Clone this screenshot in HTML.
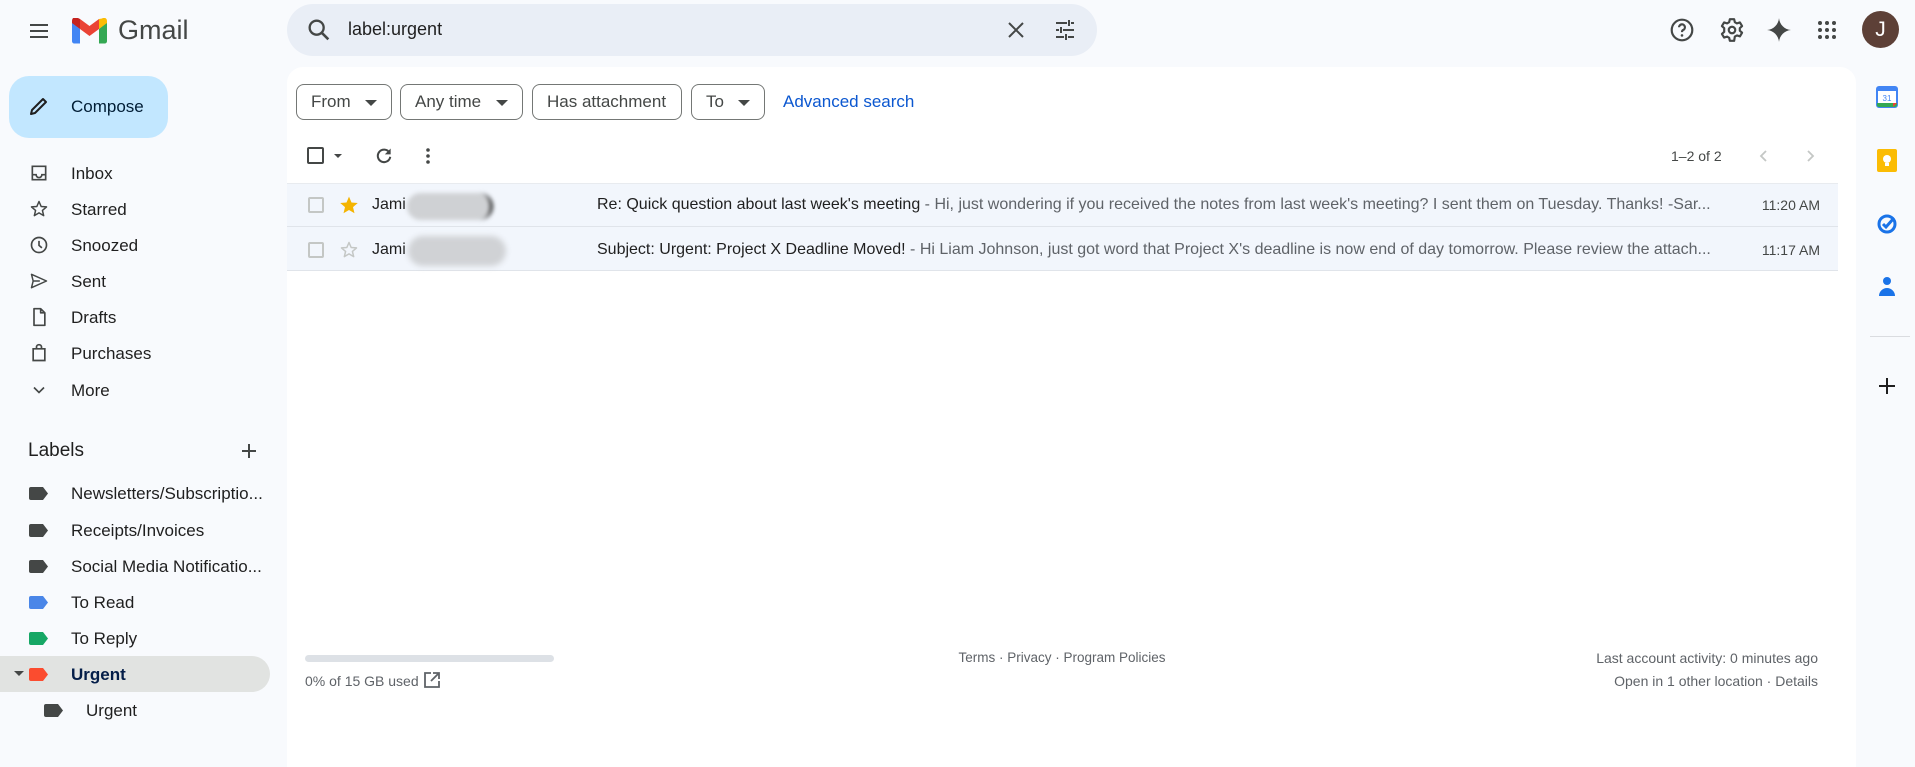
<!DOCTYPE html>
<html><head><meta charset="utf-8"><style>
*{margin:0;padding:0;box-sizing:border-box}
body{width:1915px;height:751px;overflow:hidden;background:#f8fafd;font-family:"Liberation Sans",Arial,sans-serif;color:#1f1f1f;position:relative}
.a{position:absolute}
.nav{position:absolute;left:71px;font-size:17px;color:#1f1f1f;line-height:20px}
.ic{position:absolute;left:29px;width:20px;height:20px}
.chip{position:absolute;top:84px;height:36px;border:1px solid #747775;border-radius:8px;font-size:17px;line-height:34px;padding-left:14px;color:#444746;background:#fff}
.chip .tri{position:absolute;right:14px;top:15px;width:0;height:0;border-left:6px solid transparent;border-right:6px solid transparent;border-top:6px solid #444746}
.lab{position:absolute;left:29px;width:19px;height:13px}
.row{position:absolute;left:287px;width:1551px;height:44px;background:#f2f6fc;border-bottom:1px solid #e0e4ea;font-size:16px;line-height:44px}
.g{color:#5f6368}
.foot{font-size:14px;color:#5f6368;position:absolute;white-space:nowrap}
</style></head><body>
<svg class="a" style="left:27px;top:19px" width="24" height="24" viewBox="0 0 24 24"><path d="M3 6h18M3 12h18M3 18h18" stroke="#444746" stroke-width="2"/></svg>
<svg class="a" style="left:72px;top:18px" width="35" height="26" viewBox="0 0 35 26"><path d="M0 4v19c0 1.5 1 2.5 2.5 2.5H8V11z" fill="#4285f4"/><path d="M27 25.5h5.5c1.5 0 2.5-1 2.5-2.5V4L27 11z" fill="#34a853"/><path d="M27 1v10l8-6V3c0-3-3-4-5-2.5z" fill="#fbbc04"/><path d="M8 11V1l9.5 7L27 1v10l-9.5 7z" fill="#ea4335"/><path d="M0 3v2l8 6V1L5 -.5C3-1.5 0-.5 0 3z" fill="#c5221f"/></svg>
<div class="a" style="left:118px;top:15px;font-size:27px;color:#444746">Gmail</div>
<div class="a" style="left:287px;top:4px;width:810px;height:52px;border-radius:26px;background:#e9eef6"></div>
<svg class="a" style="left:305px;top:16px" width="28" height="28" viewBox="0 0 24 24"><circle cx="10" cy="10" r="6" fill="none" stroke="#444746" stroke-width="2"/><path d="M14.5 14.5L20 20" stroke="#444746" stroke-width="2.2"/></svg>
<div class="a" style="left:348px;top:19px;font-size:18px;color:#1f1f1f">label:urgent</div>
<svg class="a" style="left:1004px;top:18px" width="24" height="24" viewBox="0 0 24 24"><path d="M5 5l14 14M19 5L5 19" stroke="#444746" stroke-width="2"/></svg>
<svg class="a" style="left:1053px;top:18px" width="24" height="24" viewBox="0 0 24 24"><path d="M3 5h11M18 5h3M3 12h3M10 12h11M3 19h8M15 19h6M16 2v6M8 9v6M13 16v6" stroke="#444746" stroke-width="2"/></svg>
<svg class="a" style="left:1669px;top:17px" width="26" height="26" viewBox="0 0 24 24"><circle cx="12" cy="12" r="9.5" fill="none" stroke="#444746" stroke-width="2"/><path d="M9.3 9.5a2.7 2.7 0 1 1 3.7 2.5c-.8.4-1 1-1 2" fill="none" stroke="#444746" stroke-width="2"/><circle cx="12" cy="17" r="1.2" fill="#444746"/></svg>
<svg class="a" style="left:1719px;top:17px" width="26" height="26" viewBox="0 0 24 24"><path d="M10 2h4l.6 2.8 2 1.1 2.7-.9 2 3.4-2.1 1.9v2.3l2.1 1.9-2 3.4-2.7-.9-2 1.1L14 22h-4l-.6-2.8-2-1.1-2.7.9-2-3.4 2.1-1.900V10.3L2.7 8.4l2-3.4 2.7.9 2-1.1z" fill="none" stroke="#444746" stroke-width="2" stroke-linejoin="round"/><circle cx="12" cy="12" r="3" fill="none" stroke="#444746" stroke-width="2"/></svg>
<svg class="a" style="left:1766px;top:17px" width="26" height="26" viewBox="0 0 24 24"><path d="M12 1C12.6 7 17 11.4 23 12 17 12.6 12.6 17 12 23 11.4 17 7 12.6 1 12 7 11.4 11.4 7 12 1z" fill="#444746"/></svg>
<svg class="a" style="left:1815px;top:18px" width="24" height="24" viewBox="0 0 24 24" fill="#444746"><circle cx="5" cy="5" r="2"/><circle cx="12" cy="5" r="2"/><circle cx="19" cy="5" r="2"/><circle cx="5" cy="12" r="2"/><circle cx="12" cy="12" r="2"/><circle cx="19" cy="12" r="2"/><circle cx="5" cy="19" r="2"/><circle cx="12" cy="19" r="2"/><circle cx="19" cy="19" r="2"/></svg>
<div class="a" style="left:1862px;top:11px;width:37px;height:37px;border-radius:50%;background:#5d4037;color:#fff;font-size:21px;text-align:center;line-height:37px">J</div>
<div class="a" style="left:9px;top:76px;width:159px;height:62px;border-radius:20px;background:#c2e7ff"></div>
<svg class="a" style="left:27px;top:94px" width="24" height="24" viewBox="0 0 24 24"><path d="M4 20l1-4L16 5l3 3L8 19z" fill="none" stroke="#1f1f1f" stroke-width="2" stroke-linejoin="round"/></svg>
<div class="a" style="left:71px;top:97px;font-size:17px;color:#001d35">Compose</div>
<svg class="ic" style="top:163px" viewBox="0 0 24 24"><path d="M4 4h16v16H4zM4 14h4.5a3.5 3.5 0 0 0 7 0H20" fill="none" stroke="#444746" stroke-width="2"/></svg><div class="nav" style="top:164px">Inbox</div>
<svg class="ic" style="top:199px" viewBox="0 0 24 24"><path d="M12 3l2.6 6 6.4.5-4.9 4.2 1.5 6.3L12 16.6 6.4 20l1.5-6.3L3 9.5 9.4 9z" fill="none" stroke="#444746" stroke-width="1.8" stroke-linejoin="round"/></svg><div class="nav" style="top:200px">Starred</div>
<svg class="ic" style="top:235px" viewBox="0 0 24 24"><circle cx="12" cy="12" r="9" fill="none" stroke="#444746" stroke-width="2"/><path d="M12 7v5.5l3.5 3" fill="none" stroke="#444746" stroke-width="2"/></svg><div class="nav" style="top:236px">Snoozed</div>
<svg class="ic" style="top:271px" viewBox="0 0 24 24"><path d="M3 4l18 8-18 8 2-8zM5 12h8" fill="none" stroke="#444746" stroke-width="1.8" stroke-linejoin="round"/></svg><div class="nav" style="top:272px">Sent</div>
<svg class="ic" style="top:307px" viewBox="0 0 24 24"><path d="M6 2h8l5 5v15H6zM14 2v5h5" fill="none" stroke="#444746" stroke-width="2" stroke-linejoin="round"/></svg><div class="nav" style="top:308px">Drafts</div>
<svg class="ic" style="top:343px" viewBox="0 0 24 24"><path d="M5 7h14v14H5zM9 7V5a3 3 0 0 1 6 0v2" fill="none" stroke="#444746" stroke-width="2"/></svg><div class="nav" style="top:344px">Purchases</div>
<svg class="ic" style="top:380px" viewBox="0 0 24 24"><path d="M6 9l6 6 6-6" fill="none" stroke="#444746" stroke-width="2"/></svg><div class="nav" style="top:381px">More</div>
<div class="a" style="left:28px;top:440px;font-size:19px;color:#1f1f1f">Labels</div>
<svg class="a" style="left:240px;top:442px" width="18" height="18" viewBox="0 0 18 18"><path d="M9 2v14M2 9h14" stroke="#444746" stroke-width="2"/></svg>
<svg class="lab" style="top:487px" viewBox="0 0 19 13"><path d="M2 0h12l5 6.5L14 13H2a2 2 0 0 1-2-2V2a2 2 0 0 1 2-2z" fill="#444746"/></svg><div class="nav" style="top:484px">Newsletters/Subscriptio...</div>
<svg class="lab" style="top:524px" viewBox="0 0 19 13"><path d="M2 0h12l5 6.5L14 13H2a2 2 0 0 1-2-2V2a2 2 0 0 1 2-2z" fill="#444746"/></svg><div class="nav" style="top:521px">Receipts/Invoices</div>
<svg class="lab" style="top:560px" viewBox="0 0 19 13"><path d="M2 0h12l5 6.5L14 13H2a2 2 0 0 1-2-2V2a2 2 0 0 1 2-2z" fill="#444746"/></svg><div class="nav" style="top:557px">Social Media Notificatio...</div>
<svg class="lab" style="top:596px" viewBox="0 0 19 13"><path d="M2 0h12l5 6.5L14 13H2a2 2 0 0 1-2-2V2a2 2 0 0 1 2-2z" fill="#4a86e8"/></svg><div class="nav" style="top:593px">To Read</div>
<svg class="lab" style="top:632px" viewBox="0 0 19 13"><path d="M2 0h12l5 6.5L14 13H2a2 2 0 0 1-2-2V2a2 2 0 0 1 2-2z" fill="#16a765"/></svg><div class="nav" style="top:629px">To Reply</div>
<div class="a" style="left:0;top:656px;width:270px;height:36px;border-radius:0 18px 18px 0;background:#e1e3e1"></div>
<div class="a" style="left:14px;top:671px;border-left:5px solid transparent;border-right:5px solid transparent;border-top:5px solid #444746"></div>
<svg class="lab" style="top:668px" viewBox="0 0 19 13"><path d="M2 0h12l5 6.5L14 13H2a2 2 0 0 1-2-2V2a2 2 0 0 1 2-2z" fill="#fb4c2f"/></svg><div class="nav" style="top:665px;font-weight:bold;color:#041e49">Urgent</div>
<svg class="lab" style="top:704px;left:44px" viewBox="0 0 19 13"><path d="M2 0h12l5 6.5L14 13H2a2 2 0 0 1-2-2V2a2 2 0 0 1 2-2z" fill="#444746"/></svg><div class="nav" style="top:701px;left:86px">Urgent</div>
<div class="a" style="left:287px;top:67px;width:1569px;height:700px;background:#fff;border-radius:16px 16px 0 0"></div>
<div class="chip" style="left:296px;width:96px">From<span class="tri"></span></div>
<div class="chip" style="left:400px;width:123px">Any time<span class="tri"></span></div>
<div class="chip" style="left:532px;width:150px">Has attachment</div>
<div class="chip" style="left:691px;width:74px">To<span class="tri"></span></div>
<div class="a" style="left:783px;top:92px;font-size:17px;color:#0b57d0">Advanced search</div>
<div class="a" style="left:307px;top:147px;width:17px;height:17px;border:2px solid #444746;border-radius:2px"></div>
<div class="a" style="left:334px;top:154px;border-left:4px solid transparent;border-right:4px solid transparent;border-top:4px solid #444746"></div>
<svg class="a" style="left:374px;top:146px" width="20" height="20" viewBox="0 0 24 24"><path d="M18.5 8A7.5 7.5 0 1 0 19.5 13" fill="none" stroke="#444746" stroke-width="2.4"/><path d="M20 3v7h-7z" fill="#444746"/></svg>
<svg class="a" style="left:418px;top:146px" width="20" height="20" viewBox="0 0 20 20" fill="#444746"><circle cx="10" cy="4" r="1.8"/><circle cx="10" cy="10" r="1.8"/><circle cx="10" cy="16" r="1.8"/></svg>
<div class="a" style="left:1671px;top:148px;font-size:14px;color:#444746">1–2 of 2</div>
<svg class="a" style="left:1754px;top:146px" width="20" height="20" viewBox="0 0 20 20"><path d="M12 5l-5 5 5 5" fill="none" stroke="#c4c7c5" stroke-width="1.8"/></svg>
<svg class="a" style="left:1800px;top:146px" width="20" height="20" viewBox="0 0 20 20"><path d="M8 5l5 5-5 5" fill="none" stroke="#c4c7c5" stroke-width="1.8"/></svg>
<div class="row" style="top:183px;border-top:1px solid #e8ebef"></div>
<div class="row" style="top:227px"></div>
<div class="a" style="left:308px;top:197px;width:16px;height:16px;border:2px solid #c4c7c5;border-radius:2px"></div>
<div class="a" style="left:308px;top:242px;width:16px;height:16px;border:2px solid #c4c7c5;border-radius:2px"></div>
<svg class="a" style="left:339px;top:195px" width="20" height="20" viewBox="0 0 24 24"><path d="M12 2l3 7 7.5.6-5.7 4.9 1.8 7.4L12 18 5.4 21.9l1.8-7.4L1.5 9.6 9 9z" fill="#f4b400"/></svg>
<svg class="a" style="left:339px;top:240px" width="20" height="20" viewBox="0 0 24 24"><path d="M12 3l2.6 6 6.4.5-4.9 4.2 1.5 6.3L12 16.6 6.4 20l1.5-6.3L3 9.5 9.4 9z" fill="none" stroke="#c4c7c5" stroke-width="1.8" stroke-linejoin="round"/></svg>
<div class="a" style="left:372px;top:196px;font-size:16px">Jami</div>
<div class="a" style="left:372px;top:241px;font-size:16px">Jami</div>
<div class="a" style="left:407px;top:193px;width:86px;height:27px;border-radius:14px;background:#cfd1d4;filter:blur(2px);border-right:3px solid #222"></div>
<div class="a" style="left:408px;top:236px;width:98px;height:30px;border-radius:15px;background:#d0d2d5;filter:blur(3px)"></div>
<div class="a" style="left:597px;top:196px;font-size:16px;white-space:nowrap">Re: Quick question about last week's meeting <span class="g">- Hi, just wondering if you received the notes from last week's meeting? I sent them on Tuesday. Thanks! -Sar...</span></div>
<div class="a" style="left:597px;top:241px;font-size:16px;white-space:nowrap">Subject: Urgent: Project X Deadline Moved! <span class="g">- Hi Liam Johnson, just got word that Project X's deadline is now end of day tomorrow. Please review the attach...</span></div>
<div class="a" style="left:1740px;width:80px;top:197px;font-size:14px;text-align:right;color:#444746">11:20 AM</div>
<div class="a" style="left:1740px;width:80px;top:242px;font-size:14px;text-align:right;color:#444746">11:17 AM</div>
<div class="a" style="left:305px;top:655px;width:249px;height:7px;border-radius:4px;background:#dde1e6"></div>
<div class="foot" style="left:305px;top:673px">0% of 15 GB used</div>
<svg class="a" style="left:423px;top:671px" width="18" height="18" viewBox="0 0 18 18"><path d="M8 2H2v14h14v-6M10 2h6v6M16 2L8 10" fill="none" stroke="#5f6368" stroke-width="1.8"/></svg>
<div class="foot" style="left:912px;top:650px;width:300px;text-align:center;font-size:13.5px">Terms · Privacy · Program Policies</div>
<div class="foot" style="left:1518px;width:300px;top:650px;text-align:right">Last account activity: 0 minutes ago</div>
<div class="foot" style="left:1518px;width:300px;top:673px;text-align:right">Open in 1 other location · Details</div>
<svg class="a" style="left:1876px;top:86px" width="22" height="22" viewBox="0 0 22 22"><rect x="1" y="1" width="20" height="20" rx="2" fill="#fff" stroke="#4285f4" stroke-width="2"/><rect x="1" y="1" width="20" height="4" fill="#4285f4"/><path d="M1 17h20v2a2 2 0 0 1-2 2H3a2 2 0 0 1-2-2z" fill="#34a853"/><path d="M17 17h4l-4 4z" fill="#ea4335"/><text x="11" y="15" font-size="8" font-family="Liberation Sans" fill="#4285f4" text-anchor="middle">31</text></svg>
<svg class="a" style="left:1877px;top:149px" width="20" height="23" viewBox="0 0 20 23"><rect width="20" height="23" rx="2" fill="#fbbc04"/><circle cx="10" cy="10" r="4" fill="#fff"/><rect x="8" y="14" width="4" height="3" fill="#fff"/></svg>
<svg class="a" style="left:1876px;top:212px" width="22" height="22" viewBox="0 0 22 22"><circle cx="11" cy="12" r="8" fill="none" stroke="#1a73e8" stroke-width="3"/><path d="M7 12l3 3 8-9" fill="none" stroke="#1a73e8" stroke-width="3"/></svg>
<svg class="a" style="left:1878px;top:276px" width="18" height="22" viewBox="0 0 18 22"><circle cx="9" cy="5" r="4" fill="#1a73e8"/><path d="M1 20a8 8 0 0 1 16 0z" fill="#1a73e8"/></svg>
<div class="a" style="left:1870px;top:336px;width:40px;height:1px;background:#dadce0"></div>
<svg class="a" style="left:1877px;top:376px" width="20" height="20" viewBox="0 0 20 20"><path d="M10 2v16M2 10h16" stroke="#1f1f1f" stroke-width="2"/></svg>
</body></html>
